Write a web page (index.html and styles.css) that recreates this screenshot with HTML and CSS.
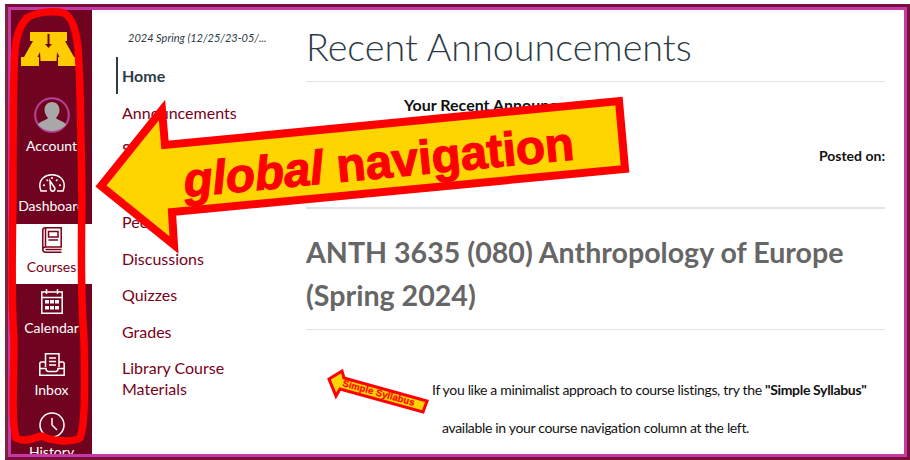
FILE: index.html
```html
<!DOCTYPE html>
<html lang="en">
<head>
    <meta charset="UTF-8">
    <title>Recent Announcements</title>
    <link rel="stylesheet" href="styles.css">
</head>
<body>

    <div class="frame">
        <div class="frame-inner">

            <nav class="global-nav">
                <svg class="logo" width="56" height="34" viewBox="0 0 56 34">
                    <path fill="#ffcc00" d="M9 0H46V9H44L53 25H56V34H37V25H38.500L36 20 35.500 29H19.500L19 20 16.500 25H18V34H0V25H3L12 9H9Z"/>
                    <path fill="#700320" d="M26.500 2H28.500V12H31L27.500 16 24 12H26.500Z"/>
                </svg>

                <a class="nav-item nav-account">
                    <svg class="nav-icon" width="36" height="36" viewBox="0 0 36 36">
                        <circle cx="18" cy="18" r="16.800" fill="#700320" stroke="#b5439c" stroke-width="2"/>
                        <path fill="#a8a8a8" d="M18 5c5 0 7.500 4 7.500 8 0 3.500-2 6-3.500 8 1 2 8 3 10 6.500C29 31.500 24 34 18 34S7 31.500 4 27.500c2-3.500 9-4.500 10-6.500-1.500-2-3.500-4.500-3.500-8 0-4 2.500-8 7.500-8z"/>
                    </svg>
                    <span>Account</span>
                </a>

                <a class="nav-item">
                    <svg class="nav-icon line" width="26" height="18" viewBox="0 0 26 18">
                        <path d="M8 17H2C1.200 15 .8 13 .8 11.500.8 5 6 .8 13 .8S25.200 5 25.200 11.500C25.200 13 24.800 15 24 17H18"/>
                        <path d="M11 7L15.500 13.500A2.400 2.400 0 0 1 14.500 17 2.400 2.400 0 0 1 11.500 15.500Z"/>
                        <path d="M4 11L6 11.500M7.500 5.500L9 7M13 3V5M18.500 5.500L17 7M22 11L20 11.500"/>
                    </svg>
                    <span>Dashboard</span>
                </a>

                <a class="nav-item active">
                    <svg class="nav-icon line" width="20" height="26" viewBox="0 0 20 26">
                        <path d="M3.500 20V.8H19.200V20H3.500C1.500 20 .8 21.500 .8 22.500S1.500 25.200 3.500 25.200H19.500M.8 22.500V3C.8 1.500 2 .8 3.500 .8"/>
                        <path d="M6.500 4.500H16V10H6.500zM6.500 13H16M3.500 22.500H19.500"/>
                    </svg>
                    <span>Courses</span>
                </a>

                <a class="nav-item">
                    <svg class="nav-icon line" width="22" height="25" viewBox="0 0 22 25">
                        <path d="M.8 3H21.200V24.200H.8zM.8 8.500H21.200M5.500 0V5M16.500 0V5"/>
                        <path class="fill" d="M4 11H8V14.500H4zM9 11H13V14.500H9zM14 11H18V14.500H14zM4 17H8V20.500H4zM9 17H13V20.500H9zM14 17H18V20.500H14z"/>
                    </svg>
                    <span>Calendar</span>
                </a>

                <a class="nav-item">
                    <svg class="nav-icon line" width="26" height="23" viewBox="0 0 26 23">
                        <path d="M6.500 14V.8H20V14M10 5H17M10 8.500H17M10 12H17"/>
                        <path d="M6.500 9H2.500C1.500 9 .8 10 .8 11V22.200H25.200V11C25.200 10 24.500 9 23.500 9H20M.8 15.500H7C7 17.500 8 18.500 9.500 18.500H16.500C18 18.500 19 17.500 19 15.500H25.200"/>
                    </svg>
                    <span>Inbox</span>
                </a>

                <a class="nav-item">
                    <svg class="nav-icon line" width="26" height="26" viewBox="0 0 26 26">
                        <circle cx="13" cy="13" r="12"/>
                        <path d="M13 6V13L18 18"/>
                    </svg>
                    <span>History</span>
                </a>
            </nav>

            <aside class="course-nav">
                <p class="term">2024 Spring (12/25/23-05/...</p>
                <ul class="section-tabs">
                    <li class="current"><a>Home</a></li>
                    <li><a>Announcements</a></li>
                    <li><a>Syllabus</a></li>
                    <li><a>Modules</a></li>
                    <li><a>People</a></li>
                    <li><a>Discussions</a></li>
                    <li><a>Quizzes</a></li>
                    <li><a>Grades</a></li>
                    <li><a>Library Course Materials</a></li>
                </ul>
            </aside>

            <main class="content">
                <h1>Recent Announcements</h1>
                <div class="announcements">
                    <h3>Your Recent Announcements</h3>
                    <p class="posted">Posted on:</p>
                </div>
                <h2>ANTH 3635 (080) Anthropology of Europe (Spring 2024)</h2>
                <div class="syllabus-note">
                    <p>If you like a minimalist approach to course listings, try the <strong>"Simple Syllabus"</strong></p>
                    <p class="second">available in your course navigation column at the left.</p>
                </div>
            </main>

        </div>
    </div>

    <!-- hand drawn notes on top of the screenshot -->
    <svg class="notes" width="910" height="460" viewBox="0 0 910 460">
        <path class="scribble" d="M14 75C14 45 17 28 27 18 38 11 55 11 64 13 72 17 76 30 78 48 81 90 81 150 82 200 81 250 81 300 84 340 85 390 85 425 80 438 70 443 52 441 42 436 32 438 26 443 16 438 11 420 14 380 14 340 11 300 12 250 13 200 13 150 13 100 14 75Z"/>

        <polygon class="arrow" points="101,186 162,110 165,145 619,101 625,169 172,212 174,245"/>
        <text class="arrow-text" transform="rotate(-5.500 185 197)" x="185" y="197"><tspan font-style="italic">global</tspan> navigation</text>

        <polygon class="arrow small" points="329,379 342,371 344,378 427,401 423,412 340,389 336,396"/>
        <text class="arrow-text small" transform="rotate(15.500 342 386)" x="342" y="386">Simple Syllabus</text>
    </svg>

</body>
</html>
```

FILE: styles.css
```css
* {
    box-sizing: border-box;
}

html, body {
    margin: 0;
    height: 460px;
    overflow: hidden;
    background-color: white;
}

body {
    font-family: Lato, "Open Sans", sans-serif;
    position: relative;
}

.frame {
    margin: 4px 0 0 5px;
    width: 905px;
    height: 456px;
    border: 3px solid #7a0f3c;
    border-left-color: #7c2340;
}

.frame-inner {
    display: flex;
    height: 100%;
    border: 3px solid #c43aa4;
    background-color: white;
    overflow: hidden;
}

/* global nav */
.global-nav {
    width: 81px;
    flex-shrink: 0;
    background-color: #700320;
    padding-top: 22px;
    display: flex;
    flex-direction: column;
    align-items: center;
    overflow: hidden;
}

.logo {
    flex-shrink: 0;
    margin: 0 6px 31px 0;
}

.nav-item {
    flex-shrink: 0;
    width: 100%;
    height: 62px;
    display: flex;
    flex-direction: column;
    align-items: center;
    justify-content: flex-end;
    gap: 5px;
    padding-bottom: 9px;
    color: white;
    font-size: 14px;
    line-height: 18px;
}

.nav-account {
    height: 65px;
    gap: 4px;
    padding-bottom: 7px;
}

.nav-item.active {
    height: 60px;
    padding-bottom: 8px;
    background-color: white;
    color: #7a0019;
}

.nav-icon {
    display: block;
    flex-shrink: 0;
}

.line path, .line circle {
    fill: none;
    stroke: currentColor;
    stroke-width: 1.500;
}

.line path.fill {
    fill: currentColor;
    stroke: none;
}

/* course nav */
.course-nav {
    width: 214px;
    flex-shrink: 0;
    padding: 21px 0 0 24px;
}

.term {
    margin: 0 0 12px 12px;
    font-size: 11px;
    line-height: 14px;
    font-style: italic;
    color: #2d3b45;
    white-space: nowrap;
}

.section-tabs {
    list-style: none;
    margin: 0;
    padding: 0;
    font-size: 16px;
    line-height: 21px;
    color: #7a0019;
}

.section-tabs li {
    padding: 8px 30px 7.500px 6px;
}

.section-tabs .current {
    border-left: 2px solid #2d3b45;
    padding-left: 4px;
    color: #2d3b45;
    font-weight: bold;
}

/* page content */
.content {
    width: 579px;
    flex-shrink: 0;
    color: #2d3b45;
}

h1 {
    margin: 12px 0 0;
    padding-bottom: 10px;
    font-size: 37.700px;
    line-height: 49px;
    font-weight: 300;
    border-bottom: 1px solid #dfe3e6;
}

.announcements {
    height: 127px;
    padding-top: 13px;
    border-bottom: 2px solid #dfe3e6;
}

h3 {
    margin: 0 0 0 98px;
    font-size: 16px;
    line-height: 20px;
    color: #111;
}

.posted {
    margin: 31px 0 0;
    text-align: right;
    font-size: 14px;
    line-height: 20px;
    font-weight: bold;
    color: #111;
}

h2 {
    margin: 0;
    padding: 22px 0 12px;
    font-size: 28.600px;
    line-height: 43px;
    font-weight: bold;
    color: #666;
    border-bottom: 1px solid #dfe3e6;
}

.syllabus-note {
    padding: 50px 0 0 126px;
    font-size: 14px;
    line-height: 20px;
    letter-spacing: -.33px;
    color: #111;
}

.syllabus-note p {
    margin: 0;
}

.syllabus-note .second {
    margin: 18px 0 0 10px;
}

/* annotations */
.notes {
    position: absolute;
    left: 0;
    top: 0;
}

.scribble {
    fill: none;
    stroke: #ff0000;
    stroke-width: 7.500;
    stroke-linejoin: round;
}

.arrow {
    fill: #ffd500;
    stroke: #ff0000;
    stroke-width: 8;
    stroke-miterlimit: 10;
}

.arrow.small {
    stroke-width: 3;
}

.arrow-text {
    font-family: "Liberation Sans", Arial, sans-serif;
    font-weight: bold;
    font-size: 47.700px;
    fill: #ff0000;
    stroke: #ff0000;
    stroke-width: 1.200;
}

.arrow-text.small {
    font-size: 9.500px;
    letter-spacing: .1px;
    stroke-width: .2;
}
```
